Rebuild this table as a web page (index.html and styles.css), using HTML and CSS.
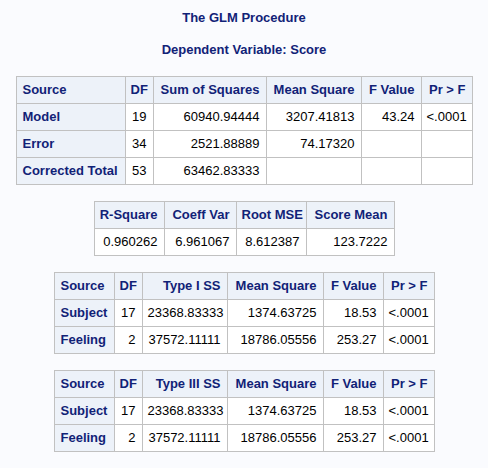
FILE: index.html
```html
<!DOCTYPE html>
<html>
<head>
<meta charset="utf-8">
<link rel="stylesheet" href="styles.css">
</head>
<body>
<div class="page">
  <h1 class="title">The GLM Procedure</h1>
  <h2 class="title sub">Dependent Variable: Score</h2>

  <table class="tbl anova">
    <colgroup><col class="c-src"><col class="c-df"><col class="c-ss"><col class="c-ms"><col class="c-f"><col class="c-p"></colgroup>
    <thead>
      <tr><th class="l">Source</th><th>DF</th><th>Sum of Squares</th><th>Mean Square</th><th>F Value</th><th>Pr &gt; F</th></tr>
    </thead>
    <tbody>
      <tr><th class="l">Model</th><td>19</td><td>60940.94444</td><td>3207.41813</td><td>43.24</td><td>&lt;.0001</td></tr>
      <tr><th class="l">Error</th><td>34</td><td>2521.88889</td><td>74.17320</td><td></td><td></td></tr>
      <tr><th class="l">Corrected Total</th><td>53</td><td>63462.83333</td><td></td><td></td><td></td></tr>
    </tbody>
  </table>

  <table class="tbl fit">
    <colgroup><col class="c-r2"><col class="c-cv"><col class="c-rmse"><col class="c-mean"></colgroup>
    <thead>
      <tr><th>R-Square</th><th>Coeff Var</th><th>Root MSE</th><th>Score Mean</th></tr>
    </thead>
    <tbody>
      <tr><td>0.960262</td><td>6.961067</td><td>8.612387</td><td>123.7222</td></tr>
    </tbody>
  </table>

  <table class="tbl effects">
    <colgroup><col class="c-src"><col class="c-df"><col class="c-ss"><col class="c-ms"><col class="c-f"><col class="c-p"></colgroup>
    <thead>
      <tr><th class="l">Source</th><th>DF</th><th>Type I SS</th><th>Mean Square</th><th>F Value</th><th>Pr &gt; F</th></tr>
    </thead>
    <tbody>
      <tr><th class="l">Subject</th><td>17</td><td>23368.83333</td><td>1374.63725</td><td>18.53</td><td>&lt;.0001</td></tr>
      <tr><th class="l">Feeling</th><td>2</td><td>37572.11111</td><td>18786.05556</td><td>253.27</td><td>&lt;.0001</td></tr>
    </tbody>
  </table>

  <table class="tbl effects">
    <colgroup><col class="c-src"><col class="c-df"><col class="c-ss"><col class="c-ms"><col class="c-f"><col class="c-p"></colgroup>
    <thead>
      <tr><th class="l">Source</th><th>DF</th><th>Type III SS</th><th>Mean Square</th><th>F Value</th><th>Pr &gt; F</th></tr>
    </thead>
    <tbody>
      <tr><th class="l">Subject</th><td>17</td><td>23368.83333</td><td>1374.63725</td><td>18.53</td><td>&lt;.0001</td></tr>
      <tr><th class="l">Feeling</th><td>2</td><td>37572.11111</td><td>18786.05556</td><td>253.27</td><td>&lt;.0001</td></tr>
    </tbody>
  </table>
</div>
</body>
</html>
```

FILE: styles.css
```css
html, body {
  margin: 0;
  padding: 0;
  background: #fafbfe;
}
.page {
  display: flex;
  flex-direction: column;
  align-items: center;
  padding-top: 10px;
  font-family: "Liberation Sans", Arial, sans-serif;
  font-size: 13px;
}
.title {
  margin: 0;
  font-size: 13px;
  line-height: 15px;
  font-weight: bold;
  color: #112277;
}
.sub {
  margin-top: 17px;
  margin-bottom: 19px;
}
.tbl {
  border-collapse: collapse;
  table-layout: fixed;
  margin-bottom: 16px;
  font-size: 13px;
  line-height: 16px;
  border: 1px solid #c1c1c1;
}
.tbl th, .tbl td {
  border: 1px solid #c1c1c1;
  padding: 5px 6px 5px 5px;
  white-space: nowrap;
  text-align: right;
  overflow: visible;
}
.tbl th {
  background: #edf2f9;
  color: #112277;
  font-weight: bold;
}
.tbl td {
  background: #ffffff;
  color: #000000;
}
.tbl th.l {
  text-align: left;
  padding-left: 6px;
}

/* Analysis of variance table */
.anova { width: 456px; }
.anova .c-src { width: 109px; }
.anova .c-df { width: 28px; }
.anova .c-ss { width: 113px; }
.anova .c-ms { width: 95px; }
.anova .c-f { width: 60px; }
.anova .c-p { width: 51px; }

/* Fit statistics */
.fit { width: 300px; }
.fit .c-r2 { width: 70px; }
.fit .c-cv { width: 72px; }
.fit .c-rmse { width: 70px; }
.fit .c-mean { width: 88px; }

/* Type I / Type III tables */
.effects { width: 380px; }
.effects .c-src { width: 60px; }
.effects .c-df { width: 28px; }
.effects .c-ss { width: 85px; }
.effects .c-ms { width: 96px; }
.effects .c-f { width: 60px; }
.effects .c-p { width: 51px; }
```
